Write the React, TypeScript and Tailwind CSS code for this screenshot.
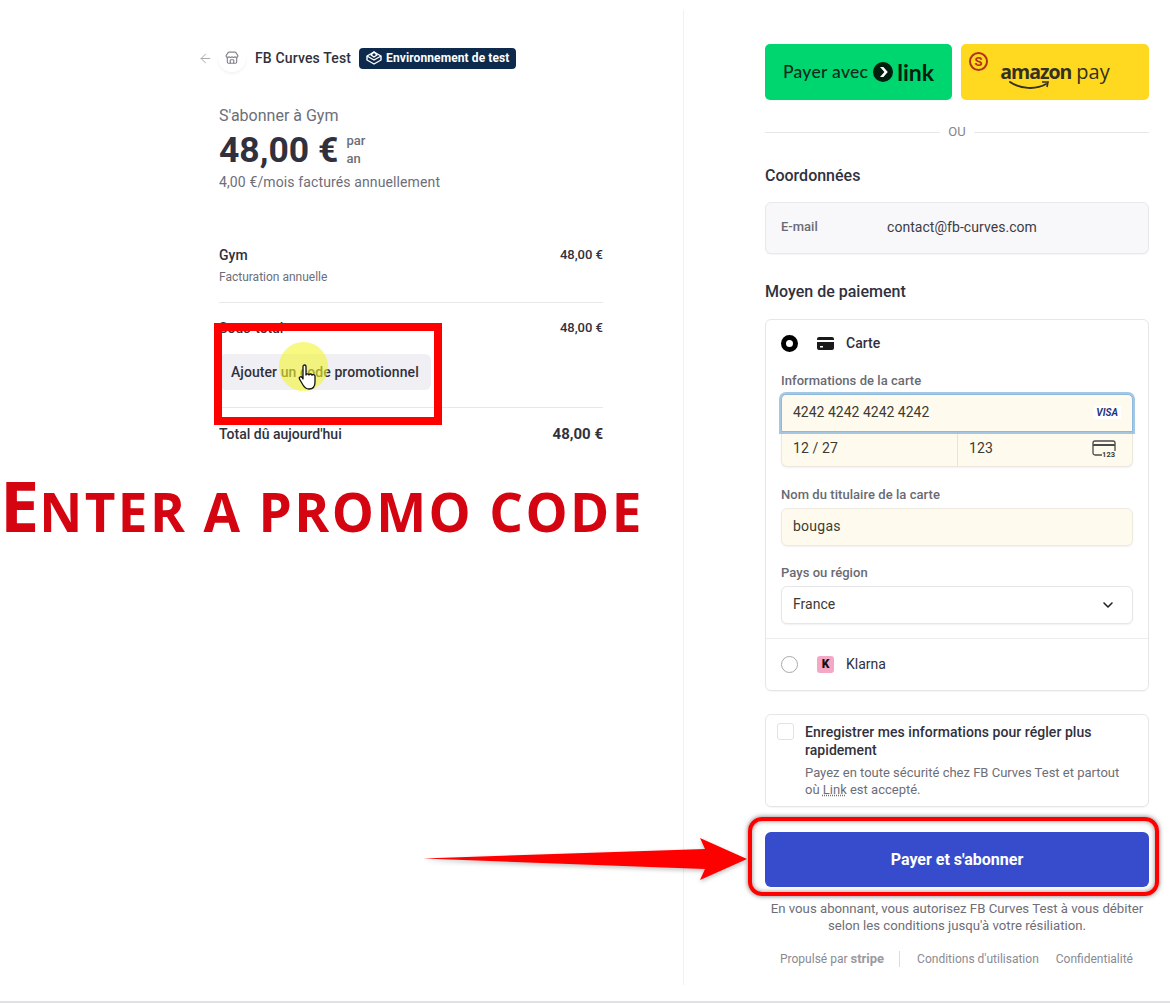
import { ArrowLeft, ChevronDown, Store } from 'lucide-react';

// Summary row on the left column
function LineItem({ label, sub, price }: { label: string; sub?: string; price: string }) {
    return (
        <div className="flex justify-between">
            <div>
                <div className="text-[14px] leading-5 font-medium text-[#30313d]">{label}</div>
                {sub && <div className="text-[12px] leading-4 mt-[4px] text-[#6d6e78]">{sub}</div>}
            </div>
            <div className="text-[13px] leading-5 font-medium text-[#30313d]">{price}</div>
        </div>
    );
}

function Field({ label, children }: { label: string; children: React.ReactNode }) {
    return (
        <div>
            <div className="text-[13px] leading-4 tracking-[0.05px] font-medium text-[#6a6a72] mb-[5px]">{label}</div>
            {children}
        </div>
    );
}

function LeftPanel() {
    return (
        <div className="w-[684px] h-[975px] mt-[10px] shrink-0 border-r border-[#f1f1f3] pl-[198px] pr-[80px] pt-[34px]">
            {/* Header */}
            <div className="flex items-center h-[28px]">
                <ArrowLeft className="w-[15px] h-[15px] text-[#a9a9b0]" strokeWidth={1.6} />
                <div className="ml-[5px] w-[28px] h-[28px] rounded-full flex items-center justify-center shadow-[0_2px_3px_rgba(0,0,0,0.05)]">
                    <Store className="w-[14px] h-[14px] text-[#85858c]" strokeWidth={2} />
                </div>
                <span className="ml-[9px] text-[14px] tracking-[0.15px] font-medium text-[#30313d]">FB Curves Test</span>
                <span className="ml-[8px] h-[21px] px-[7px] rounded-[4px] bg-[#0d2a4c] text-white text-[12px] tracking-[0.1px] font-bold flex items-center gap-[4px]">
                    <svg width="16" height="14" viewBox="0 0 16 14" fill="none" stroke="white" strokeWidth="1.4" strokeLinejoin="round">
                        <path d="M8 1 15 5v4l-7 4-7-4V5z" />
                        <path d="M1 5l7 4 7-4M8 1l-3 3 3 2 3-2z" />
                    </svg>
                    Environnement de test
                </span>
            </div>

            {/* Price */}
            <div className="ml-[21px] mt-[34px]">
                <div className="text-[16px] leading-5 text-[#6d6e78]">S'abonner à Gym</div>
                <div className="flex items-center mt-[5px] h-[38px]">
                    <span className="text-[35.5px] leading-[38px] font-bold text-[#30313d]">48,00 €</span>
                    <span className="ml-[8px] text-[13px] leading-[18px] font-medium text-[#6d6e78]">par<br />an</span>
                </div>
                <div className="mt-[3px] text-[14px] leading-5 tracking-[0.12px] text-[#6d6e78]">4,00 €/mois facturés annuellement</div>

                {/* Line items */}
                <div className="mt-[53px] pb-[17px] border-b border-[#e8e8ea]">
                    <LineItem label="Gym" sub="Facturation annuelle" price="48,00 €" />
                </div>
                <div className="mt-[15px] pb-[17px] border-b border-[#e8e8ea]">
                    <LineItem label="Sous-total" price="48,00 €" />
                    <div className="mt-[16px] w-[212px] h-[36px] rounded-[6px] bg-[#f0eff3] flex items-center pl-[12px] text-[14px] tracking-[0.07px] font-medium text-[#30313d]">
                        Ajouter un code promotionnel
                    </div>
                </div>
                <div className="mt-[16px] flex justify-between items-center text-[#30313d] font-medium">
                    <span className="text-[14px] leading-5">Total dû aujourd'hui</span>
                    <span className="text-[15px] leading-5 font-bold">48,00 €</span>
                </div>
            </div>
        </div>
    );
}

function WalletButtons() {
    return (
        <div className="flex gap-[9px]">
            <div className="w-[187px] h-[56px] rounded-[5px] bg-[#00d66f] flex items-center justify-center text-[#0b2b1c]">
                <span className="text-[17.5px] font-medium font-['Lato',sans-serif] tracking-[0.3px] mt-[1px]">Payer avec</span>
                <svg className="ml-[5px]" width="20" height="20" viewBox="0 0 20 20">
                    <circle cx="10" cy="10" r="10" fill="#011e0f" />
                    <path d="M7 5h3.4l4.4 5-4.4 5H7l4.4-5z" fill="#fff" />
                </svg>
                <span className="ml-[4px] text-[23px] font-bold font-['Lato',sans-serif] text-[#011e0f]">link</span>
            </div>
            <div className="relative w-[188px] h-[56px] rounded-[5px] bg-[#ffd91f] flex items-center justify-center text-[#333022]">
                <span className="absolute left-[8px] top-[8px] w-[19px] h-[19px] rounded-full border-2 border-[#b5301a] text-[#b5301a] text-[13px] leading-none font-bold flex items-center justify-center">S</span>
                <span className="relative text-[19.5px] font-bold font-['Open_Sans',sans-serif] tracking-[-1px]">
                    amazon
                    <svg className="absolute left-[9px] top-[24px]" width="42" height="9" viewBox="0 0 42 9" fill="none">
                        <path d="M1 1c10 7 26 8 36 2" stroke="#333022" strokeWidth="2" strokeLinecap="round" />
                        <path d="M33 1l6 0-1 5" stroke="#333022" strokeWidth="1.6" />
                    </svg>
                </span>
                <span className="ml-[5px] text-[20px] font-['Open_Sans',sans-serif]">pay</span>
            </div>
        </div>
    );
}

function PaymentBox() {
    return (
        <div className="mt-[17px] h-[372px] rounded-[6px] border border-[#e6e6e8] shadow-[0_1px_1px_rgba(0,0,0,0.04)] px-[15px]">
            <div className="h-[48px] pb-[2px] flex items-center">
                <span className="w-[17px] h-[17px] rounded-full border-[5px] border-black bg-white" />
                <svg className="ml-[19px]" width="17" height="13" viewBox="0 0 17 13">
                    <path d="M2 0h13a2 2 0 0 1 2 2v1H0V2a2 2 0 0 1 2-2zM0 5h17v6a2 2 0 0 1-2 2H2a2 2 0 0 1-2-2zm3 4v1.6h3V9z" fill="#1a1a1a" fillRule="evenodd" />
                </svg>
                <span className="ml-[12px] text-[14px] font-medium text-[#30313d]">Carte</span>
            </div>
            <div className="mt-[5px]">
                <Field label="Informations de la carte">
                    <div className="relative z-10 h-[38px] rounded-t-[5px] bg-[#fffaee] border border-[#8db9dc] ring-2 ring-[#8db9dc]/80 flex items-center justify-between pl-[11px] pr-[11px] pb-[2px] text-[14px] text-[#3b3a33]">
                        4242 4242 4242 4242
                        <span className="bg-white px-[3px] text-[10px] font-bold italic text-[#27337a] leading-[13px]">VISA</span>
                    </div>
                    <div className="h-[35px] flex rounded-b-[6px] bg-[#fffaee] border border-t-0 border-[#ece8df] shadow-[0_1px_2px_rgba(0,0,0,0.06)] text-[14px] tracking-[0.1px] text-[#3b3a33]">
                        <div className="w-[176px] pl-[11px] pb-[1px] flex items-center border-r border-[#e9e3d8]">12 / 27</div>
                        <div className="flex-1 pl-[11px] pr-[16px] pb-[1px] flex items-center justify-between">
                            123
                            <svg className="mt-[1px]" width="24" height="18" viewBox="0 0 24 18" fill="none">
                                <path d="M10 15H3a2 2 0 0 1-2-2V3a2 2 0 0 1 2-2h18a2 2 0 0 1 2 2v8" stroke="#4a4a48" strokeWidth="1.3" />
                                <path d="M1 4h22v2H1z" fill="#4a4a48" />
                                <text x="10" y="17" fontSize="7.5" fontWeight="700" fill="#3a3a38" fontFamily="Roboto, sans-serif">123</text>
                            </svg>
                        </div>
                    </div>
                </Field>
            </div>
            <div className="mt-[20px]">
                <Field label="Nom du titulaire de la carte">
                    <div className="h-[38px] rounded-[6px] bg-[#fffaee] border border-[#efeadf] shadow-[0_1px_2px_rgba(0,0,0,0.06)] flex items-center pl-[11px] pb-[1px] text-[14px] tracking-[0.25px] text-[#3b3a33]">
                        bougas
                    </div>
                </Field>
            </div>
            <div className="mt-[19px]">
                <Field label="Pays ou région">
                    <div className="h-[38px] rounded-[6px] bg-white border border-[#e6e6e8] shadow-[0_1px_2px_rgba(0,0,0,0.06)] flex items-center justify-between pl-[11px] pr-[16px] pb-[1px] text-[14px] text-[#3b3a33]">
                        France
                        <ChevronDown className="w-[16px] h-[16px] text-[#222]" strokeWidth={2.4} />
                    </div>
                </Field>
            </div>
            <div className="-mx-[15px] mt-[14px] border-t border-[#ececee] h-[51px] flex items-center px-[15px]">
                <span className="w-[17px] h-[17px] rounded-full border border-[#a9a9ad] bg-white" />
                <span className="ml-[19px] w-[17px] h-[17px] rounded-[3px] bg-[#f5a8c6] flex items-center justify-center text-[12px] font-black text-[#17120f]">K</span>
                <span className="ml-[12px] text-[14px] text-[#30313d]">Klarna</span>
            </div>
        </div>
    );
}

function RightPanel() {
    return (
        <div className="w-[384px] ml-[81px] shrink-0 pt-[44px]">
            <WalletButtons />

            <div className="mt-[26px] flex items-center h-[12px]">
                <div className="flex-1 border-t border-[#e8e8ea]" />
                <span className="mx-[8px] text-[13px] text-[#85858c]">OU</span>
                <div className="flex-1 border-t border-[#e8e8ea]" />
            </div>

            <div className="mt-[28px] text-[16px] leading-5 font-medium text-[#30313d]">Coordonnées</div>
            <div className="mt-[16px] h-[52px] rounded-[6px] bg-[#f8f7fa] border border-[#e9e8ec] shadow-[0_1px_1px_rgba(0,0,0,0.04)] flex items-center pl-[15px] pb-[2px]">
                <span className="w-[106px] text-[13px] font-medium text-[#6a6a72]">E-mail</span>
                <span className="text-[14px] tracking-[0.05px] text-[#3c3c46]">contact@fb-curves.com</span>
            </div>

            <div className="mt-[28px] text-[16px] leading-5 font-medium text-[#30313d]">Moyen de paiement</div>
            <PaymentBox />

            {/* Save info */}
            <div className="mt-[23px] h-[93px] rounded-[6px] border border-[#e6e6e8] shadow-[0_1px_1px_rgba(0,0,0,0.04)] flex pl-[11px] pt-[8px]">
                <span className="w-[17px] h-[17px] rounded-[3px] border border-[#e2e2e5] bg-white shrink-0" />
                <div className="ml-[11px]">
                    <div className="text-[14px] leading-[18px] tracking-[0.05px] font-medium text-[#30313d]">
                        <div>Enregistrer mes informations pour régler plus</div>
                        <div>rapidement</div>
                    </div>
                    <div className="mt-[5px] text-[13px] leading-[17px] text-[#6d6e78]">
                        <div>Payez en toute sécurité chez FB Curves Test et partout</div>
                        <div>où <span className="underline decoration-dotted">Link</span> est accepté.</div>
                    </div>
                </div>
            </div>

            <div className="mt-[25px] h-[55px] rounded-[6px] bg-[#364ccc] flex items-center justify-center text-[16px] font-bold text-white">
                Payer et s'abonner
            </div>

            <div className="mt-[13px] text-center text-[13.2px] leading-[17px] text-[#6d6e78] whitespace-nowrap">
                <div>En vous abonnant, vous autorisez FB Curves Test à vous débiter</div>
                <div>selon les conditions jusqu'à votre résiliation.</div>
            </div>

            <div className="mt-[15px] ml-[15px] flex items-center text-[12px] text-[#8a8a92]">
                <span>Propulsé par <span className="font-bold text-[13px] text-[#9a9aa1]">stripe</span></span>
                <span className="ml-[15px] h-[16px] border-l border-[#dcdce0]" />
                <span className="ml-[17px]">Conditions d'utilisation</span>
                <span className="ml-[17px]">Confidentialité</span>
            </div>
        </div>
    );
}

export default function App() {
    return (
        <div className="relative w-[1170px] h-[1003px] overflow-hidden bg-white border-b-2 border-[#e2e2e4] font-['Roboto',sans-serif]">
            <div className="flex h-full items-start">
                <LeftPanel />
                <RightPanel />
            </div>

            {/* Video annotations drawn over the page */}
            <div className="absolute left-[214px] top-[323px] w-[228px] h-[102px] border-[8px] border-[#ff0000]" />
            <div className="absolute left-[279px] top-[342px] w-[49px] h-[49px] rounded-full bg-[#f2f530]/60" />
            <svg className="absolute left-[298px] top-[364px]" width="20" height="27" viewBox="0 0 20 27">
                <path d="M5 2.500c0-2 3-2 3 0V11c0-1.600 3-1.600 3 0 0-1.400 3-1.400 3 .3 0-1.200 3-1 3 .7v6c0 4-2 7-6 7-3 0-4.500-1.500-6-4l-3.500-6c-1-1.800 1.500-3 2.700-1.500L5 15z" fill="#fff" stroke="#111" strokeWidth="1.3" strokeLinejoin="round" />
            </svg>
            <div className="absolute left-0 top-[465px] font-['Open_Sans',sans-serif] font-bold text-[#d40511] whitespace-nowrap leading-[80px]">
                <span className="text-[70px]">E</span>
                <span className="text-[53px] tracking-[2.4px]">NTER A PROMO CODE</span>
            </div>
            <svg className="absolute left-[420px] top-[835px] drop-shadow-[0_2px_2px_rgba(0,0,0,0.25)]" width="330" height="48" viewBox="0 0 330 48">
                <path d="M3 23.500 285 14 280 3 327 24 280 45 285 34z" fill="#ff0000" />
            </svg>
            <div className="absolute left-[748px] top-[817px] w-[411px] h-[79px] rounded-[14px] border-[4px] border-[#ff0000] shadow-[0_0_5px_rgba(0,0,0,0.55),inset_0_0_5px_rgba(0,0,0,0.45)]" />
        </div>
    );
}
